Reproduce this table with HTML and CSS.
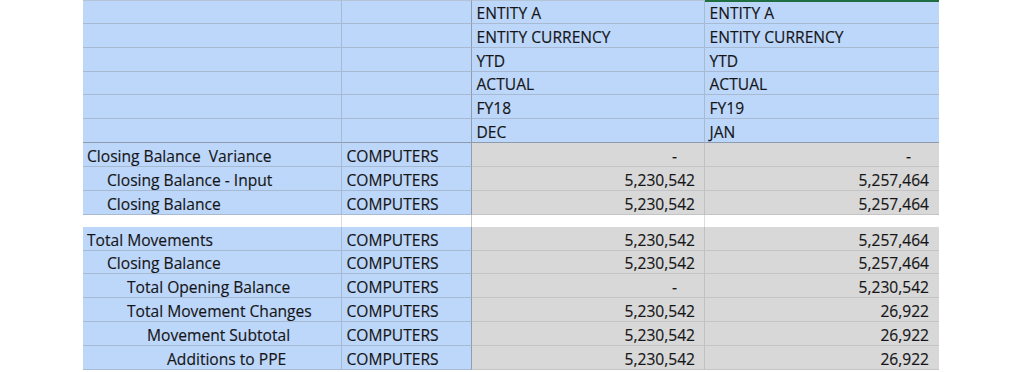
FILE: index.html
```html
<!DOCTYPE html>
<html lang="en">
<head>
<meta charset="utf-8">
<title>Closing Balance Report</title>
<link rel="stylesheet" href="styles.css">
</head>
<body>
<div class="sheet">
  <div class="row head"><div class="c lbl"></div><div class="c ent"></div><div class="c hd">ENTITY A</div><div class="c hd sel">ENTITY A</div></div>
  <div class="row head"><div class="c lbl"></div><div class="c ent"></div><div class="c hd">ENTITY CURRENCY</div><div class="c hd">ENTITY CURRENCY</div></div>
  <div class="row head"><div class="c lbl"></div><div class="c ent"></div><div class="c hd">YTD</div><div class="c hd">YTD</div></div>
  <div class="row head"><div class="c lbl"></div><div class="c ent"></div><div class="c hd">ACTUAL</div><div class="c hd">ACTUAL</div></div>
  <div class="row head"><div class="c lbl"></div><div class="c ent"></div><div class="c hd">FY18</div><div class="c hd">FY19</div></div>
  <div class="row head last"><div class="c lbl"></div><div class="c ent"></div><div class="c hd">DEC</div><div class="c hd">JAN</div></div>

  <div class="row data"><div class="c lbl l0">Closing Balance&nbsp; Variance</div><div class="c ent">COMPUTERS</div><div class="c num"><span class="dash">-</span></div><div class="c num"><span class="dash">-</span></div></div>
  <div class="row data"><div class="c lbl l1">Closing Balance - Input</div><div class="c ent">COMPUTERS</div><div class="c num">5,230,542</div><div class="c num">5,257,464</div></div>
  <div class="row data"><div class="c lbl l1">Closing Balance</div><div class="c ent">COMPUTERS</div><div class="c num">5,230,542</div><div class="c num">5,257,464</div></div>

  <div class="row blank"><div class="c"></div><div class="c"></div><div class="c"></div><div class="c"></div></div>

  <div class="row data"><div class="c lbl l0">Total Movements</div><div class="c ent">COMPUTERS</div><div class="c num">5,230,542</div><div class="c num">5,257,464</div></div>
  <div class="row data"><div class="c lbl l1">Closing Balance</div><div class="c ent">COMPUTERS</div><div class="c num">5,230,542</div><div class="c num">5,257,464</div></div>
  <div class="row data"><div class="c lbl l2">Total Opening Balance</div><div class="c ent">COMPUTERS</div><div class="c num"><span class="dash">-</span></div><div class="c num">5,230,542</div></div>
  <div class="row data"><div class="c lbl l2">Total Movement Changes</div><div class="c ent">COMPUTERS</div><div class="c num">5,230,542</div><div class="c num">26,922</div></div>
  <div class="row data"><div class="c lbl l3">Movement Subtotal</div><div class="c ent">COMPUTERS</div><div class="c num">5,230,542</div><div class="c num">26,922</div></div>
  <div class="row data"><div class="c lbl l4">Additions to PPE</div><div class="c ent">COMPUTERS</div><div class="c num">5,230,542</div><div class="c num">26,922</div></div>
</div>
</body>
</html>
```

FILE: styles.css
```css
html, body {
  margin: 0;
  padding: 0;
  background: #ffffff;
}

body {
  padding-left: 83px;
  font-family: "Open Sans", "Noto Sans", sans-serif;
  font-size: 15.6px;
  color: #151517;
  -webkit-text-stroke: 0.15px #151517;
}

.sheet {
  width: 856px;
  display: flex;
  flex-direction: column;
}

.row {
  display: grid;
  grid-template-columns: 259px 130px 233px 234px;
  height: 23.87px;
}

.row.blank {
  height: 12px;
}

.c {
  box-sizing: border-box;
  display: flex;
  align-items: flex-end;
  line-height: 20px;
  padding: 0 4.5px 0 4.5px;
  white-space: nowrap;
  border-bottom: 1px solid #a8bad2;
  border-right: 1px solid #a8bad2;
}

.head .c {
  background: #bdd7fa;
}

.head:first-child .c {
  border-top: 1px solid #b4c3d6;
}

.head .c.sel {
  border-top: 2px solid #1f6f43;
}

.head.last .c {
  border-bottom: 1px solid #8d9bad;
}

.head .c:nth-child(2),
.data .c:nth-child(2) {
  border-right-color: #8f9db0;
}

.head .c:last-child,
.data .c:last-child {
  border-right: none;
}

.data .lbl,
.data .ent {
  background: #bdd7fa;
}

.data .num {
  background: #d8d8d8;
  justify-content: flex-end;
  padding-right: 9px;
  border-bottom-color: #c4c4c4;
  border-right-color: #c0c0c0;
}

.data .num:last-child {
  padding-right: 10px;
}

.dash {
  margin-right: 18px;
}

.blank .c {
  background: #ffffff;
  border-bottom: none;
  border-right-color: #dcdcdc;
}

.blank .c:nth-child(2) {
  border-right-color: #c8c8c8;
}

.blank .c:last-child {
  border-right: none;
}

.l0 { padding-left: 4px; }
.l1 { padding-left: 24px; }
.l2 { padding-left: 44px; }
.l3 { padding-left: 64px; }
.l4 { padding-left: 84px; }
```
